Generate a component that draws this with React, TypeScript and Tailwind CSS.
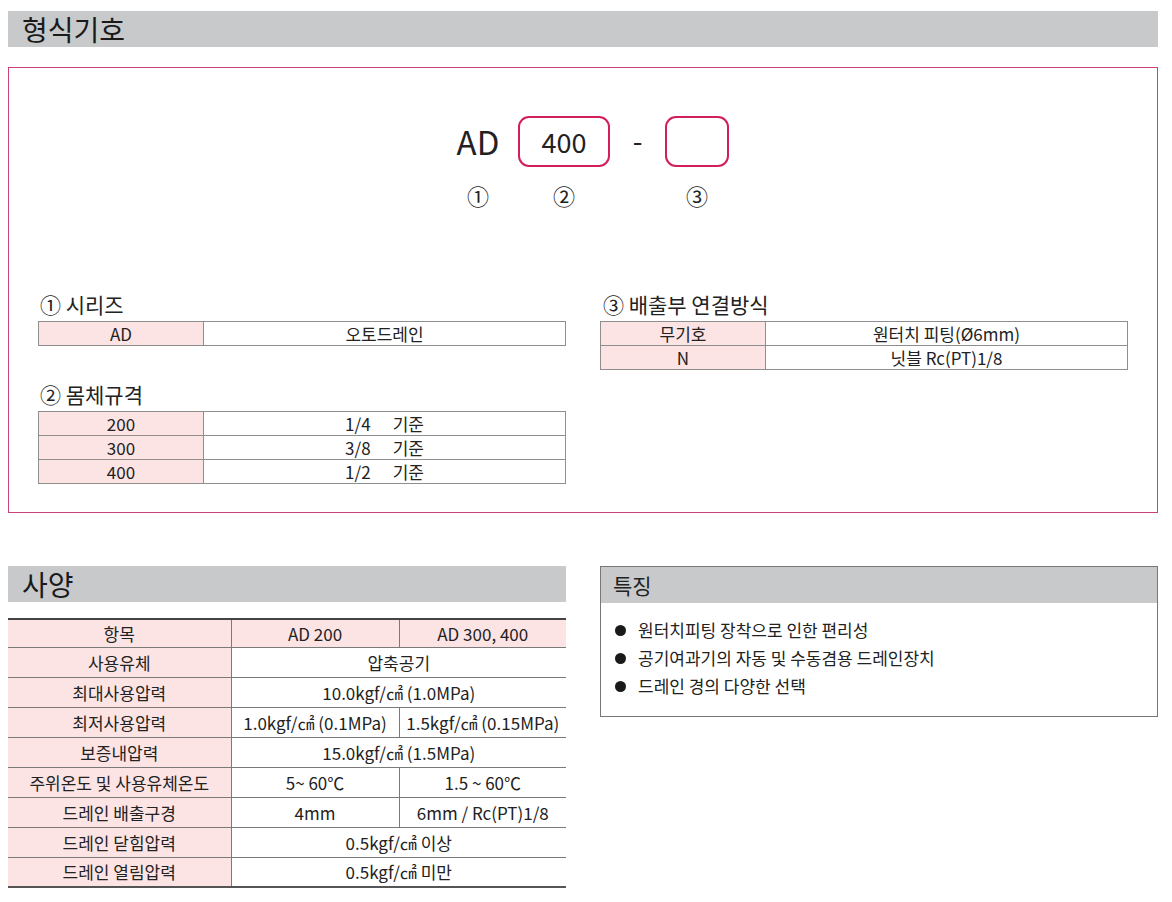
const font = { fontFamily: '"Noto Sans CJK KR", "Noto Sans", sans-serif' };

function SectionBar({ title }: { title: string }) {
  return (
    <div className="flex h-[36px] items-center bg-[#c8c9cb] pl-[14px] text-[28px] leading-none text-[#1a1a1a]">
      {title}
    </div>
  );
}

function CodeTable({ rows }: { rows: [string, React.ReactNode][] }) {
  return (
    <table className="w-full border-collapse border border-[#8e8e8e] text-[17px] leading-none text-[#222]">
      <tbody>
        {rows.map(([a, b], i) => (
          <tr key={i} className="h-[24px]">
            <td className="w-[165px] border border-[#8e8e8e] bg-[#fde4e4] text-center">{a}</td>
            <td className="border border-[#8e8e8e] text-center">{b}</td>
          </tr>
        ))}
      </tbody>
    </table>
  );
}

function Std({ size }: { size: string }) {
  return (
    <span>
      {size}
      <span className="inline-block w-[22px]" />
      기준
    </span>
  );
}

type SpecRow = { label: string; a: string; b?: string };

const specs: SpecRow[] = [
  { label: "사용유체", a: "압축공기" },
  { label: "최대사용압력", a: "10.0kgf/㎠ (1.0MPa)" },
  { label: "최저사용압력", a: "1.0kgf/㎠ (0.1MPa)", b: "1.5kgf/㎠ (0.15MPa)" },
  { label: "보증내압력", a: "15.0kgf/㎠ (1.5MPa)" },
  { label: "주위온도 및 사용유체온도", a: "5~ 60℃", b: "1.5 ~ 60℃" },
  { label: "드레인 배출구경", a: "4mm", b: "6mm / Rc(PT)1/8" },
  { label: "드레인 닫힘압력", a: "0.5kgf/㎠ 이상" },
  { label: "드레인 열림압력", a: "0.5kgf/㎠ 미만" },
];

export default function App() {
  return (
    <div style={font} className="h-[902px] w-[1172px] bg-white pl-[8px] pt-[11px] text-[#222]">
      <div className="w-[1150px]">
        <SectionBar title="형식기호" />

        {/* model code box */}
        <div className="mt-[20px] h-[446px] border-[1.5px] border-[#c8417a]">
          <div className="flex pl-[446px] pt-[48px]">
            <div className="flex w-[46px] flex-col items-center">
              <div className="flex h-[51px] items-center text-[33px] leading-none">AD</div>
              <div className="mt-[17px] text-[22px] leading-none">①</div>
            </div>
            <div className="ml-[17px] flex w-[92px] flex-col items-center">
              <div className="flex h-[51px] w-full items-center justify-center rounded-[11px] border-2 border-[#d21f5a] text-[27px] leading-none">
                400
              </div>
              <div className="mt-[17px] text-[22px] leading-none">②</div>
            </div>
            <div className="flex h-[51px] w-[55px] items-center justify-center pb-[4px] text-[28px] leading-none">
              -
            </div>
            <div className="flex w-[64px] flex-col items-center">
              <div className="h-[51px] w-full rounded-[11px] border-2 border-[#d21f5a]" />
              <div className="mt-[17px] text-[22px] leading-none">③</div>
            </div>
          </div>

          <div className="mt-[88px] grid grid-cols-[528px_528px] gap-x-[34px] pl-[29px]">
            <div>
              <div className="flex h-[27px] items-start pl-[2px] text-[21px] leading-none">① 시리즈</div>
              <CodeTable rows={[["AD", "오토드레인"]]} />
              <div className="mt-[38px] flex h-[27px] items-start pl-[2px] text-[21px] leading-none">
                ② 몸체규격
              </div>
              <CodeTable
                rows={[
                  ["200", <Std size="1/4" />],
                  ["300", <Std size="3/8" />],
                  ["400", <Std size="1/2" />],
                ]}
              />
            </div>
            <div>
              <div className="flex h-[27px] items-start pl-[3px] text-[21px] leading-none">③ 배출부 연결방식</div>
              <CodeTable
                rows={[
                  ["무기호", "원터치 피팅(Ø6mm)"],
                  ["N", "닛블 Rc(PT)1/8"],
                ]}
              />
            </div>
          </div>
        </div>

        {/* spec + features */}
        <div className="mt-[53px] grid grid-cols-[558px_558px] gap-x-[34px]">
          <div>
            <SectionBar title="사양" />
            <table className="mt-[16px] w-full border-collapse text-[17px] leading-none">
              <tbody>
                <tr className="h-[28px] border-t-2 border-b border-t-[#444] border-b-[#7a7a7a] bg-[#fde4e4]">
                  <td className="w-[223px] border-r border-[#7a7a7a] text-center">항목</td>
                  <td className="w-[168px] border-r border-[#7a7a7a] text-center">AD 200</td>
                  <td className="text-center">AD 300, 400</td>
                </tr>
                {specs.map((r, i) => (
                  <tr
                    key={r.label}
                    className={
                      "h-[30px] border-b " +
                      (i === specs.length - 1 ? "border-b-2 border-[#555]" : "border-[#7a7a7a]")
                    }
                  >
                    <td className="border-r border-[#7a7a7a] bg-[#fde4e4] text-center whitespace-nowrap">{r.label}</td>
                    {r.b ? (
                      <>
                        <td className="border-r border-[#7a7a7a] text-center whitespace-nowrap">{r.a}</td>
                        <td className="text-center whitespace-nowrap">{r.b}</td>
                      </>
                    ) : (
                      <td colSpan={2} className="text-center">
                        {r.a}
                      </td>
                    )}
                  </tr>
                ))}
              </tbody>
            </table>
          </div>

          <div className="h-[151px] border border-[#777]">
            <div className="flex h-[36px] items-center bg-[#c8c9cb] pl-[12px] text-[21px] leading-none">특징</div>
            <ul className="mt-[18px] flex flex-col gap-[10px] pl-[14px] text-[17px] leading-[18px]">
              {[
                "원터치피팅 장착으로 인한 편리성",
                "공기여과기의 자동 및 수동겸용 드레인장치",
                "드레인 경의 다양한 선택",
              ].map((t) => (
                <li key={t} className="flex items-center gap-[12px]">
                  <span className="h-[11px] w-[11px] rounded-full bg-[#1a1a1a]" />
                  {t}
                </li>
              ))}
            </ul>
          </div>
        </div>
      </div>
    </div>
  );
}
